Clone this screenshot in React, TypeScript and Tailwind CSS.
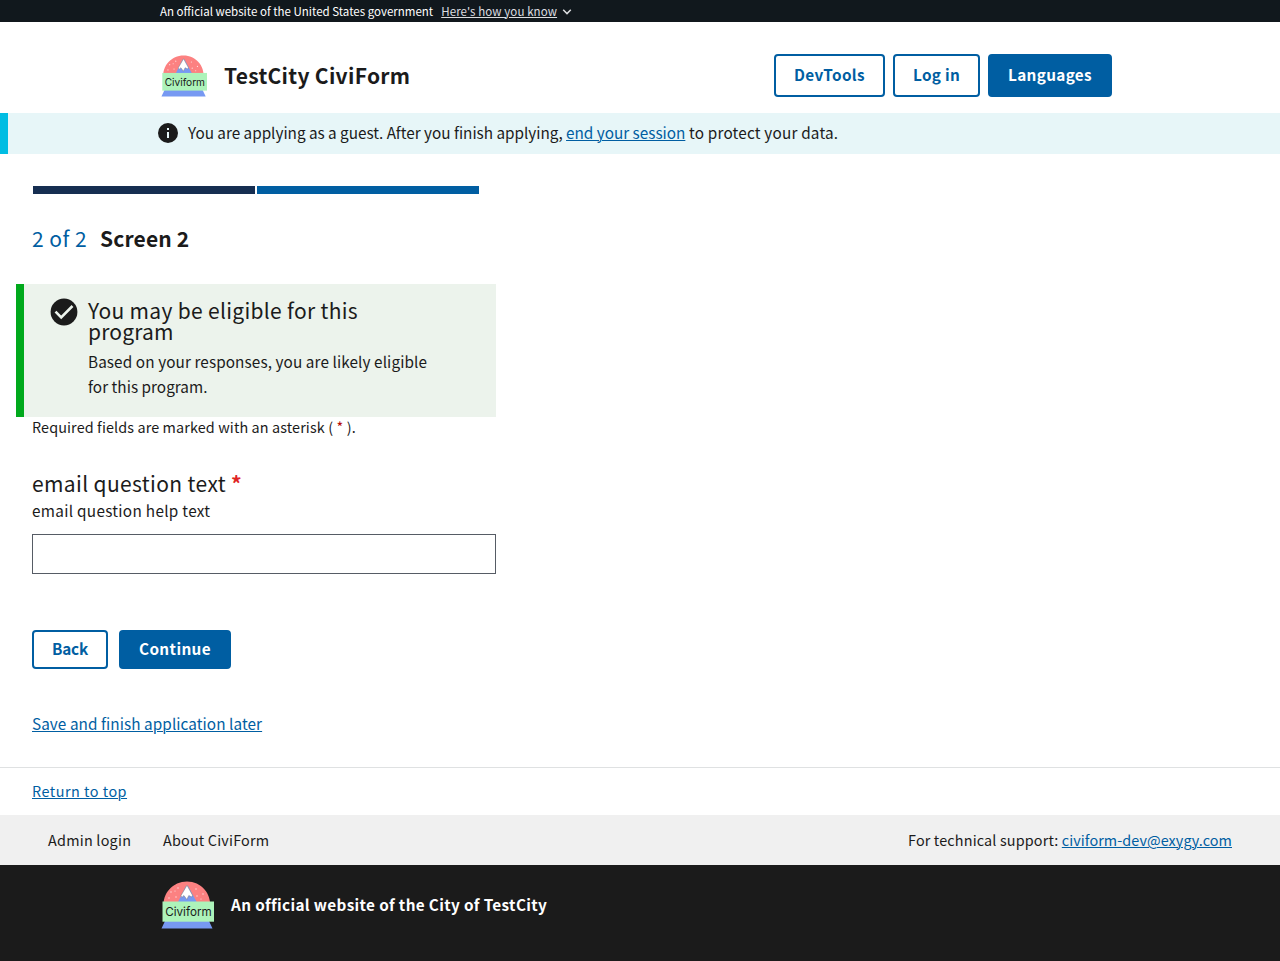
import type { ReactNode } from "react";

function Logo({ className }: { className: string }) {
  return (
    <svg viewBox="0 0 53 48" preserveAspectRatio="none" className={className} aria-hidden="true">
      <path d="M2.500 27C1 12 12 .5 26 .5S50.500 12 49 27Z" fill="#fc8181" />
      <path d="M14 27 24.500 6Q26 3.500 27.500 6L39 27Z" fill="#7799f2" />
      <path
        d="M26 4.300 20 14.500 20.800 16.500 22.900 14.500 25.800 18.500 27.800 14.500 30.700 16 31.500 14.200Z"
        fill="#fff"
        stroke="#777"
        strokeWidth=".5"
      />
      <g fill="#fff" fillOpacity=".75">
        <circle cx="17" cy="7" r=".7" />
        <circle cx="10" cy="11" r=".7" />
        <circle cx="14" cy="10" r=".6" />
        <circle cx="15" cy="16" r=".7" />
        <circle cx="8" cy="17" r=".7" />
        <circle cx="35" cy="8" r=".7" />
        <circle cx="42" cy="13" r=".7" />
        <circle cx="36" cy="15" r=".7" />
        <circle cx="40" cy="18" r=".6" />
      </g>
      <path d="M4.500 39H47.500L51.500 47.500H.5Z" fill="#7799f2" />
      <rect x="1.500" y="20.500" width="51.500" height="20.200" fill="#adf3ba" />
      <text
        x="4.200"
        y="35"
        fontFamily="Inter, sans-serif"
        fontSize="12.200"
        textLength="46.500"
        lengthAdjust="spacingAndGlyphs"
        fill="#1b1b1b"
      >
        Civiform
      </text>
    </svg>
  );
}

function Button({ children, filled, className }: { children: ReactNode; filled?: boolean; className: string }) {
  const tone = filled ? "bg-[#005ea2] text-white" : "bg-white text-[#005ea2]";
  return (
    <button
      type="button"
      className={`shrink-0 rounded border-2 border-[#005ea2] pb-0.5 text-center text-[15.3px] leading-[17px] font-bold whitespace-nowrap ${tone} ${className}`}
    >
      {children}
    </button>
  );
}

const link = "text-[#005ea2] underline underline-offset-[1px] decoration-1";

export default function App() {
  return (
    <div className="flex min-h-[961px] flex-col bg-white font-['Noto_Sans_CJK_SC','Source_Sans_Pro',sans-serif] text-[#1b1b1b]">
      <div className="flex h-[22px] items-center bg-[#11181d] pb-px pl-40 text-[11.52px] leading-4 text-white">
        <span>An official website of the United States government</span>
        <a href="#" className="ml-2 tracking-[0.09px] text-[#dcdee0] underline underline-offset-[1px] decoration-1">
          Here's how you know
        </a>
        <svg viewBox="0 0 10 6" className="ml-[5px] mt-0.5 h-[6px] w-[10px]" fill="none" stroke="#dcdee0" strokeWidth="1.5">
          <path d="M1.200 .8 5 4.600 8.800 .8" />
        </svg>
      </div>

      <header className="flex h-[91px] items-start justify-between pt-8 pr-[168px] pl-40">
        <div className="flex">
          <Logo className="mt-px ml-[1px] h-[42px] w-[46px]" />
          <div className="ml-[17px] text-[21px] leading-[43px] font-bold tracking-[0.3px]">TestCity CiviForm</div>
        </div>
        <nav className="flex gap-2">
          <Button className="h-[43px] w-[111px] tracking-[0.37px]">DevTools</Button>
          <Button className="h-[43px] w-[87px] tracking-[0.3px]">Log in</Button>
          <Button filled className="h-[43px] w-[124px] tracking-[0.34px]">Languages</Button>
        </nav>
      </header>

      <div className="flex h-[41px] items-center border-l-8 border-[#00bde3] bg-[#e7f6f8] pl-[150px] text-[15.3px] leading-6">
        <svg viewBox="0 0 20 20" className="-mt-px size-5">
          <circle cx="10" cy="10" r="10" fill="#1b1b1b" />
          <path d="M9 5h2v2H9zM9 9h2v6H9z" fill="#e7f6f8" />
        </svg>
        <p className="ml-2.5 pb-[3px] whitespace-pre">
          <span className="tracking-[-0.015px] [font-feature-settings:'liga'_1]">You are applying as a guest. After you finish applying, </span>
          <a href="#" className={link}>end your session</a>
          <span className="tracking-[0.19px]"> to protect your data.</span>
        </p>
      </div>

      <main className="flex w-[512px] flex-col px-8 pt-8">
        <div className="flex gap-0.5 px-px">
          <div className="h-2 w-[222px] bg-[#162e51]" />
          <div className="h-2 w-[222px] bg-[#005ea2]" />
        </div>
        <h1 className="mt-[28px] flex text-[21px] leading-[32px]">
          <span className="w-[68px] tracking-[0.5px] text-[#005ea2]">2 of 2</span>
          <span className="font-bold tracking-[0.15px]">Screen 2</span>
        </h1>

        <section className="-mr-4 -ml-4 mt-[30px] flex h-[133px] border-l-8 border-[#00a91c] bg-[#ecf3ec] pl-[26px]">
          <svg viewBox="0 0 28 28" className="mt-[14px] size-7 shrink-0">
            <circle cx="14" cy="14" r="13.400" fill="#1b1b1b" />
            <path d="M5.500 13.600 11.200 19.300 22.500 8" fill="none" stroke="#ecf3ec" strokeWidth="2.600" />
          </svg>
          <div className="ml-[10px] w-[380px] pt-4">
            <h2 className="text-[21px] leading-[21px] tracking-[0.31px]">
              You may be eligible for this
              <br />
              <span className="tracking-[0.2px]">program</span>
            </h2>
            <p className="mt-[7px] text-[15.3px] leading-[25px] tracking-[0.1px]">
              Based on your responses, you are likely eligible
              <br />
              <span className="tracking-[0.03px]">for this program.</span>
            </p>
          </div>
        </section>

        <p className="-mt-px text-[14.4px] leading-[21px] tracking-[0.11px]">
          Required fields are marked with an asterisk ( <span className="text-[#b50909]">*</span> ).
        </p>

        <label htmlFor="email" className="mt-[30px] text-[21px] leading-[32px] tracking-[0.37px]">
          email question text <span className="font-bold text-[#e02424]">*</span>
        </label>
        <p className="text-[15.3px] leading-[23px] tracking-[0.3px]">email question help text</p>
        <input id="email" type="email" className="mt-3 h-10 w-[464px] border border-[#565c65] px-2" />

        <div className="mt-14 flex gap-[11px]">
          <Button className="h-[39px] w-[76px] tracking-[-0.2px]">Back</Button>
          <Button filled className="h-[39px] w-[112px] tracking-[0.38px]">Continue</Button>
        </div>
        <a href="#" className={`mt-[42px] self-start text-[15.3px] leading-6 tracking-[0.07px] ${link}`}>
          Save and finish application later
        </a>
      </main>

      <div className="mt-8 h-12 border-t border-[#dfe1e2] pl-8">
        <a href="#" className={`text-[14.4px] leading-[46px] tracking-[0.5px] ${link}`}>Return to top</a>
      </div>

      <div className="flex h-[50px] items-center bg-[#f0f0f0] px-12 text-[14.4px] leading-6">
        <a href="#" className="w-[115px] tracking-[0.23px]">Admin login</a>
        <a href="#" className="tracking-[0.18px]">About CiviForm</a>
        <p className="ml-auto tracking-[0.15px]">
          For technical support: <a href="#" className={`tracking-[0.07px] ${link}`}>civiform-dev@exygy.com</a>
        </p>
      </div>

      <footer className="flex grow items-start bg-[#1b1b1b] pt-4 pl-[161px] text-white">
        <Logo className="h-12 w-[53px]" />
        <p className="ml-[17px] text-[15.3px] leading-[47px] font-bold tracking-[0.35px]">
          An official website of the City of TestCity
        </p>
      </footer>
    </div>
  );
}
